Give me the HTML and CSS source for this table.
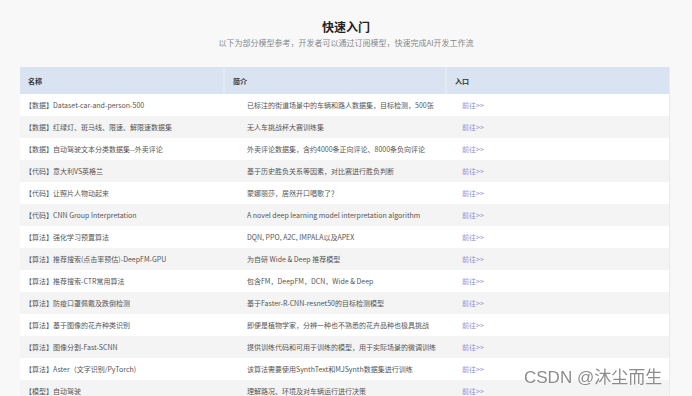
FILE: index.html
```html
<!DOCTYPE html>
<html lang="zh-CN">
<head>
  <meta charset="UTF-8" />
  <title>快速入门</title>
  <meta name="viewport" content="width=device-width, initial-scale=1.0" />
  <link rel="stylesheet" href="styles.css">
</head>
<body>

  <main class="quick-start">
    <div class="intro">
      <h1>快速入门</h1>
      <p>以下为部分模型参考，开发者可以通过订阅模型，快速完成AI开发工作流</p>
    </div>

    <table class="model-table">
      <thead>
        <tr>
          <th class="col-name">名称</th>
          <th class="col-desc">简介</th>
          <th class="col-link">入口</th>
        </tr>
      </thead>
      <tbody>
        <tr>
          <td class="col-name">【数据】Dataset-car-and-person-500</td>
          <td class="col-desc">已标注的街道场景中的车辆和路人数据集，目标检测，500张</td>
          <td class="col-link"><a href="#">前往&gt;&gt;</a></td>
        </tr>
        <tr>
          <td class="col-name">【数据】红绿灯、斑马线、限速、解限速数据集</td>
          <td class="col-desc">无人车挑战杯大赛训练集</td>
          <td class="col-link"><a href="#">前往&gt;&gt;</a></td>
        </tr>
        <tr>
          <td class="col-name">【数据】自动驾驶文本分类数据集--外卖评论</td>
          <td class="col-desc">外卖评论数据集，含约4000条正向评论、8000条负向评论</td>
          <td class="col-link"><a href="#">前往&gt;&gt;</a></td>
        </tr>
        <tr>
          <td class="col-name">【代码】意大利VS英格兰</td>
          <td class="col-desc">基于历史胜负关系等因素，对比赛进行胜负判断</td>
          <td class="col-link"><a href="#">前往&gt;&gt;</a></td>
        </tr>
        <tr>
          <td class="col-name">【代码】让照片人物动起来</td>
          <td class="col-desc">蒙娜丽莎，居然开口唱歌了？</td>
          <td class="col-link"><a href="#">前往&gt;&gt;</a></td>
        </tr>
        <tr>
          <td class="col-name">【代码】CNN Group Interpretation</td>
          <td class="col-desc">A novel deep learning model interpretation algorithm</td>
          <td class="col-link"><a href="#">前往&gt;&gt;</a></td>
        </tr>
        <tr>
          <td class="col-name">【算法】强化学习预置算法</td>
          <td class="col-desc">DQN, PPO, A2C, IMPALA以及APEX</td>
          <td class="col-link"><a href="#">前往&gt;&gt;</a></td>
        </tr>
        <tr>
          <td class="col-name">【算法】推荐搜索(点击率预估)-DeepFM-GPU</td>
          <td class="col-desc">为自研 Wide &amp; Deep 推荐模型</td>
          <td class="col-link"><a href="#">前往&gt;&gt;</a></td>
        </tr>
        <tr>
          <td class="col-name">【算法】推荐搜索-CTR常用算法</td>
          <td class="col-desc">包含FM，DeepFM，DCN，Wide &amp; Deep</td>
          <td class="col-link"><a href="#">前往&gt;&gt;</a></td>
        </tr>
        <tr>
          <td class="col-name">【算法】防疫口罩佩戴及跌倒检测</td>
          <td class="col-desc">基于Faster-R-CNN-resnet50的目标检测模型</td>
          <td class="col-link"><a href="#">前往&gt;&gt;</a></td>
        </tr>
        <tr>
          <td class="col-name">【算法】基于图像的花卉种类识别</td>
          <td class="col-desc">即便是植物学家，分辨一种也不熟悉的花卉品种也极具挑战</td>
          <td class="col-link"><a href="#">前往&gt;&gt;</a></td>
        </tr>
        <tr>
          <td class="col-name">【算法】图像分割-Fast-SCNN</td>
          <td class="col-desc">提供训练代码和可用于训练的模型，用于实际场景的微调训练</td>
          <td class="col-link"><a href="#">前往&gt;&gt;</a></td>
        </tr>
        <tr>
          <td class="col-name">【算法】Aster（文字识别/PyTorch)</td>
          <td class="col-desc">该算法需要使用SynthText和MJSynth数据集进行训练</td>
          <td class="col-link"><a href="#">前往&gt;&gt;</a></td>
        </tr>
        <tr>
          <td class="col-name">【模型】自动驾驶</td>
          <td class="col-desc">理解路况、环境及对车辆运行进行决策</td>
          <td class="col-link"><a href="#">前往&gt;&gt;</a></td>
        </tr>
      </tbody>
    </table>
  </main>

  <div class="watermark">CSDN @沐尘而生</div>

</body>
</html>
```

FILE: styles.css
```css
body {
  margin: 0;
  background: #f8f8f8;
  font-family: "Noto Sans CJK SC", "Noto Sans", sans-serif;
  color: #555;
}

/* --- Intro --- */
.intro {
  text-align: center;
  padding-top: 18px;
  height: 67px;
  box-sizing: border-box;
}
.intro h1 {
  margin: 0;
  font-size: 12px;
  line-height: 18px;
  font-weight: bold;
  color: #222;
}
.intro p {
  margin: 0;
  font-size: 8px;
  line-height: 14px;
  color: #888;
}

/* --- Table --- */
.model-table {
  margin: 0 20px;
  width: 650px;
  border-collapse: collapse;
  table-layout: fixed;
  background: #fff;
  border-right: 1px solid #ebebeb;
}
.model-table th,
.model-table td {
  text-align: left;
  font-size: 7px;
  white-space: nowrap;
  padding: 0;
}
.model-table th {
  background: #d9e3f1;
  height: 27px;
  font-weight: 600;
  color: #333;
  padding-left: 8px;
  border-left: 2px solid #e4eaf4;
}
.model-table th:first-child {
  border-left: none;
}
.model-table th.col-name { width: 195px; }
.model-table th.col-desc { width: 212px; }

.model-table td {
  height: 22px;
  color: #555;
}
.model-table td.col-name { padding-left: 5px; }
.model-table td.col-desc { padding-left: 23px; }
.model-table td.col-link { padding-left: 16px; }

.model-table tbody tr:nth-child(even) {
  background: #f4f4f4;
}

.model-table a {
  color: #8a90dc;
  text-decoration: none;
}

/* --- Watermark --- */
.watermark {
  position: fixed;
  left: 524px;
  top: 366px;
  font-family: "Liberation Sans", "Noto Sans CJK SC", sans-serif;
  font-size: 17px;
  line-height: 24px;
  color: #8c8c8c;
  text-shadow: 0 0 2px #fff, 0 0 1px #fff;
  white-space: nowrap;
}
```
